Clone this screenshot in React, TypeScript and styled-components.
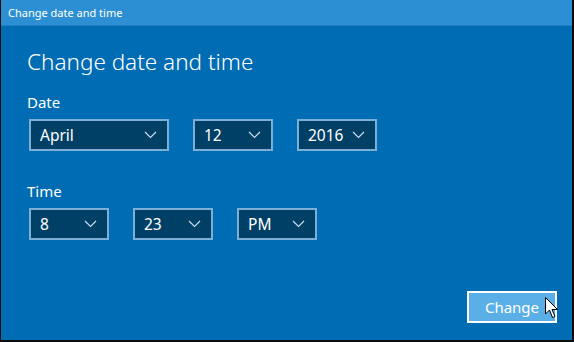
import React from 'react';
import styled, { createGlobalStyle } from 'styled-components';

const GlobalStyle = createGlobalStyle`
  html, body {
    margin: 0;
    padding: 0;
    background: #0c0c0c;
  }
  body {
    font-family: 'Noto Sans', 'Open Sans', sans-serif;
  }
`;

const Window = styled.div`
  width: 571px;
  height: 340px;
  margin-left: 1px;
  background: #006cb3;
  display: flex;
  flex-direction: column;
  position: relative;
  overflow: hidden;
`;

const TitleBar = styled.div`
  height: 25px;
  flex: none;
  background: #2d8fd3;
  border-bottom: 1px solid #1f7fc2;
  display: flex;
  align-items: center;
  padding-left: 7px;
  color: #ffffff;
  font-size: 11px;
`;

const Body = styled.div`
  flex: 1;
  display: flex;
  flex-direction: column;
  padding: 20px 0 0 26px;
`;

const Heading = styled.h1`
  margin: 0;
  font-weight: 300;
  font-size: 22.5px;
  line-height: 32px;
  color: #ffffff;
`;

const Label = styled.div<{ $top: number }>`
  margin-top: ${p => p.$top}px;
  font-size: 15px;
  line-height: 20px;
  color: #ffffff;
`;

const Row = styled.div`
  display: flex;
  gap: 24px;
  margin-top: 7px;
  margin-left: 2px;
`;

const Select = styled.div<{ $width: number }>`
  width: ${p => p.$width}px;
  height: 32px;
  box-sizing: border-box;
  border: 2px solid #7cafd6;
  background: #003f66;
  display: flex;
  align-items: center;
  justify-content: space-between;
  padding: 0 10px 0 9px;
  color: #ffffff;
  font-size: 15.5px;
`;

const Footer = styled.div`
  margin-top: auto;
  display: flex;
  justify-content: flex-end;
  padding: 0 15px 17px 0;
`;

const Button = styled.div`
  position: relative;
  width: 90px;
  height: 32px;
  box-sizing: border-box;
  border: 2px solid #ffffff;
  background: #5aafe6;
  display: flex;
  align-items: center;
  justify-content: center;
  color: #ffffff;
  font-size: 15px;
`;

const Cursor = styled.svg`
  position: absolute;
  left: 76px;
  top: 4px;
`;

const Chevron = () => (
  <svg width="13" height="8" viewBox="0 0 13 8">
    <path d="M1 1 L6.5 6.5 L12 1" fill="none" stroke="#c9e0f1" strokeWidth="1.2" />
  </svg>
);

const Dropdown: React.FC<{ value: string; width: number }> = ({ value, width }) => (
  <Select $width={width}>
    <span>{value}</span>
    <Chevron />
  </Select>
);

export default function App() {
  return (
    <>
      <GlobalStyle />
      <Window>
        <TitleBar>Change date and time</TitleBar>
        <Body>
          <Heading>Change date and time</Heading>
          <Label $top={14}>Date</Label>
          <Row>
            <Dropdown value="April" width={140} />
            <Dropdown value="12" width={80} />
            <Dropdown value="2016" width={80} />
          </Row>
          <Label $top={30}>Time</Label>
          <Row>
            <Dropdown value="8" width={80} />
            <Dropdown value="23" width={80} />
            <Dropdown value="PM" width={80} />
          </Row>
          <Footer>
            <Button>
              Change
              <Cursor width="14" height="22" viewBox="0 0 14 22">
                <path
                  d="M0.5 0.5 L0.5 17 L4.5 13 L7.5 20.5 L10 19.5 L7 12.5 L12.5 12.5 Z"
                  fill="#ffffff"
                  stroke="#000000"
                  strokeWidth="1"
                  strokeLinejoin="miter"
                />
              </Cursor>
            </Button>
          </Footer>
        </Body>
      </Window>
    </>
  );
}
